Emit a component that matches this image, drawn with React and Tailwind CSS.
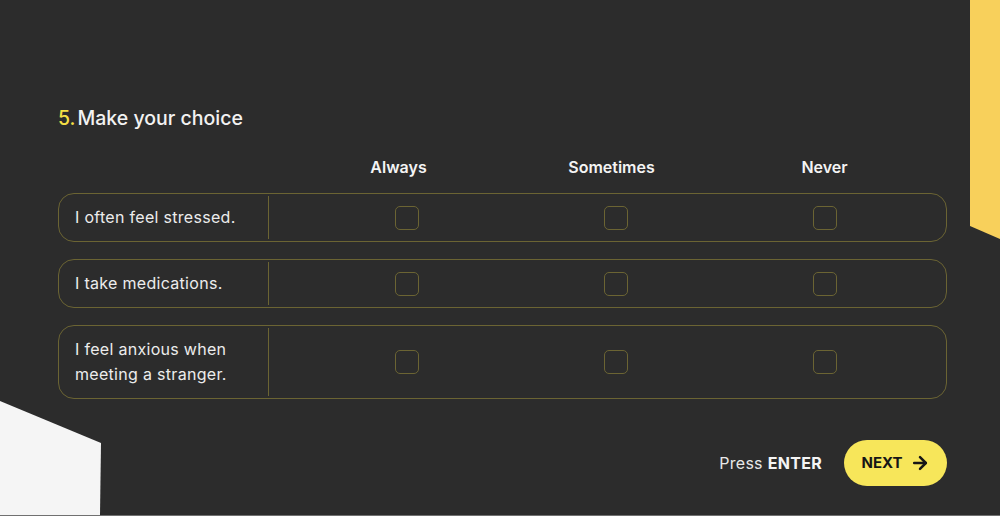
import React from "react";
import { ArrowRight } from "lucide-react";

const rows = [
  { id: 1, text: "I often feel stressed." },
  { id: 2, text: "I take medications." },
  { id: 3, text: "I feel anxious when meeting a stranger." },
];

const options = ["Always", "Sometimes", "Never"];

const App = () => {
  return (
    <div
      className="relative w-full h-[516px] overflow-hidden bg-[#2c2c2c] border-b border-[#707070]"
      style={{ fontFamily: "Inter, 'Noto Sans', sans-serif" }}
    >
      {/* decorations */}
      <svg className="absolute right-0 top-0" width="30" height="240" viewBox="0 0 30 240">
        <polygon points="0,0 30,0 30,239 0,226" fill="#f8d05b" />
      </svg>
      <svg className="absolute left-0 bottom-0" width="102" height="114" viewBox="0 0 102 114">
        <polygon points="0,0 101,42 100,114 0,114" fill="#f5f5f5" />
      </svg>

      <div className="relative pl-[58px] pr-[53px] pt-[104px]">
        <h1 className="flex items-baseline text-[19.5px] leading-7 font-medium text-[#f2f2f2]">
          <span className="text-[#f4df45] mr-[2px]">5.</span>
          <span>Make your choice</span>
        </h1>

        <div className="flex mt-[23px] text-[16px] leading-6 font-semibold text-[#f4f4f4]">
          <div className="w-[234px]" />
          {options.map((opt) => (
            <div key={opt} className="w-[213px] text-center">
              {opt}
            </div>
          ))}
        </div>

        <div className="mt-[14px] flex flex-col gap-[17px]">
          {rows.map((row) => (
            <div
              key={row.id}
              className="flex min-h-[49px] border border-[#6b6433] rounded-[16px]"
            >
              <div className="w-[209px] pl-4 pr-3 py-[11px] flex items-center text-[16px] leading-[25px] text-[#ececec] tracking-[0.3px]">
                {row.text}
              </div>
              <div className="w-px bg-[#6b6433] my-[2px]" />
              <div className="flex pl-[33px]">
                {options.map((opt) => (
                  <div key={opt} className="w-[209px] flex items-center justify-center">
                    <div className="w-6 h-6 border border-[#6b6433] rounded-[5px]" />
                  </div>
                ))}
              </div>
            </div>
          ))}
        </div>

        <div className="mt-[41px] flex items-center justify-end gap-[22px]">
          <div className="text-[16px] text-[#e8e8e8] tracking-[0.3px]">
            Press <span className="font-bold text-[#f4f4f4]">ENTER</span>
          </div>
          <button className="w-[103px] h-[46px] rounded-full bg-[#f7e65a] flex items-center justify-center gap-[7px] text-[15px] font-bold text-[#161616]">
            NEXT
            <ArrowRight size={20} strokeWidth={3} />
          </button>
        </div>
      </div>
    </div>
  );
};

export default App;
